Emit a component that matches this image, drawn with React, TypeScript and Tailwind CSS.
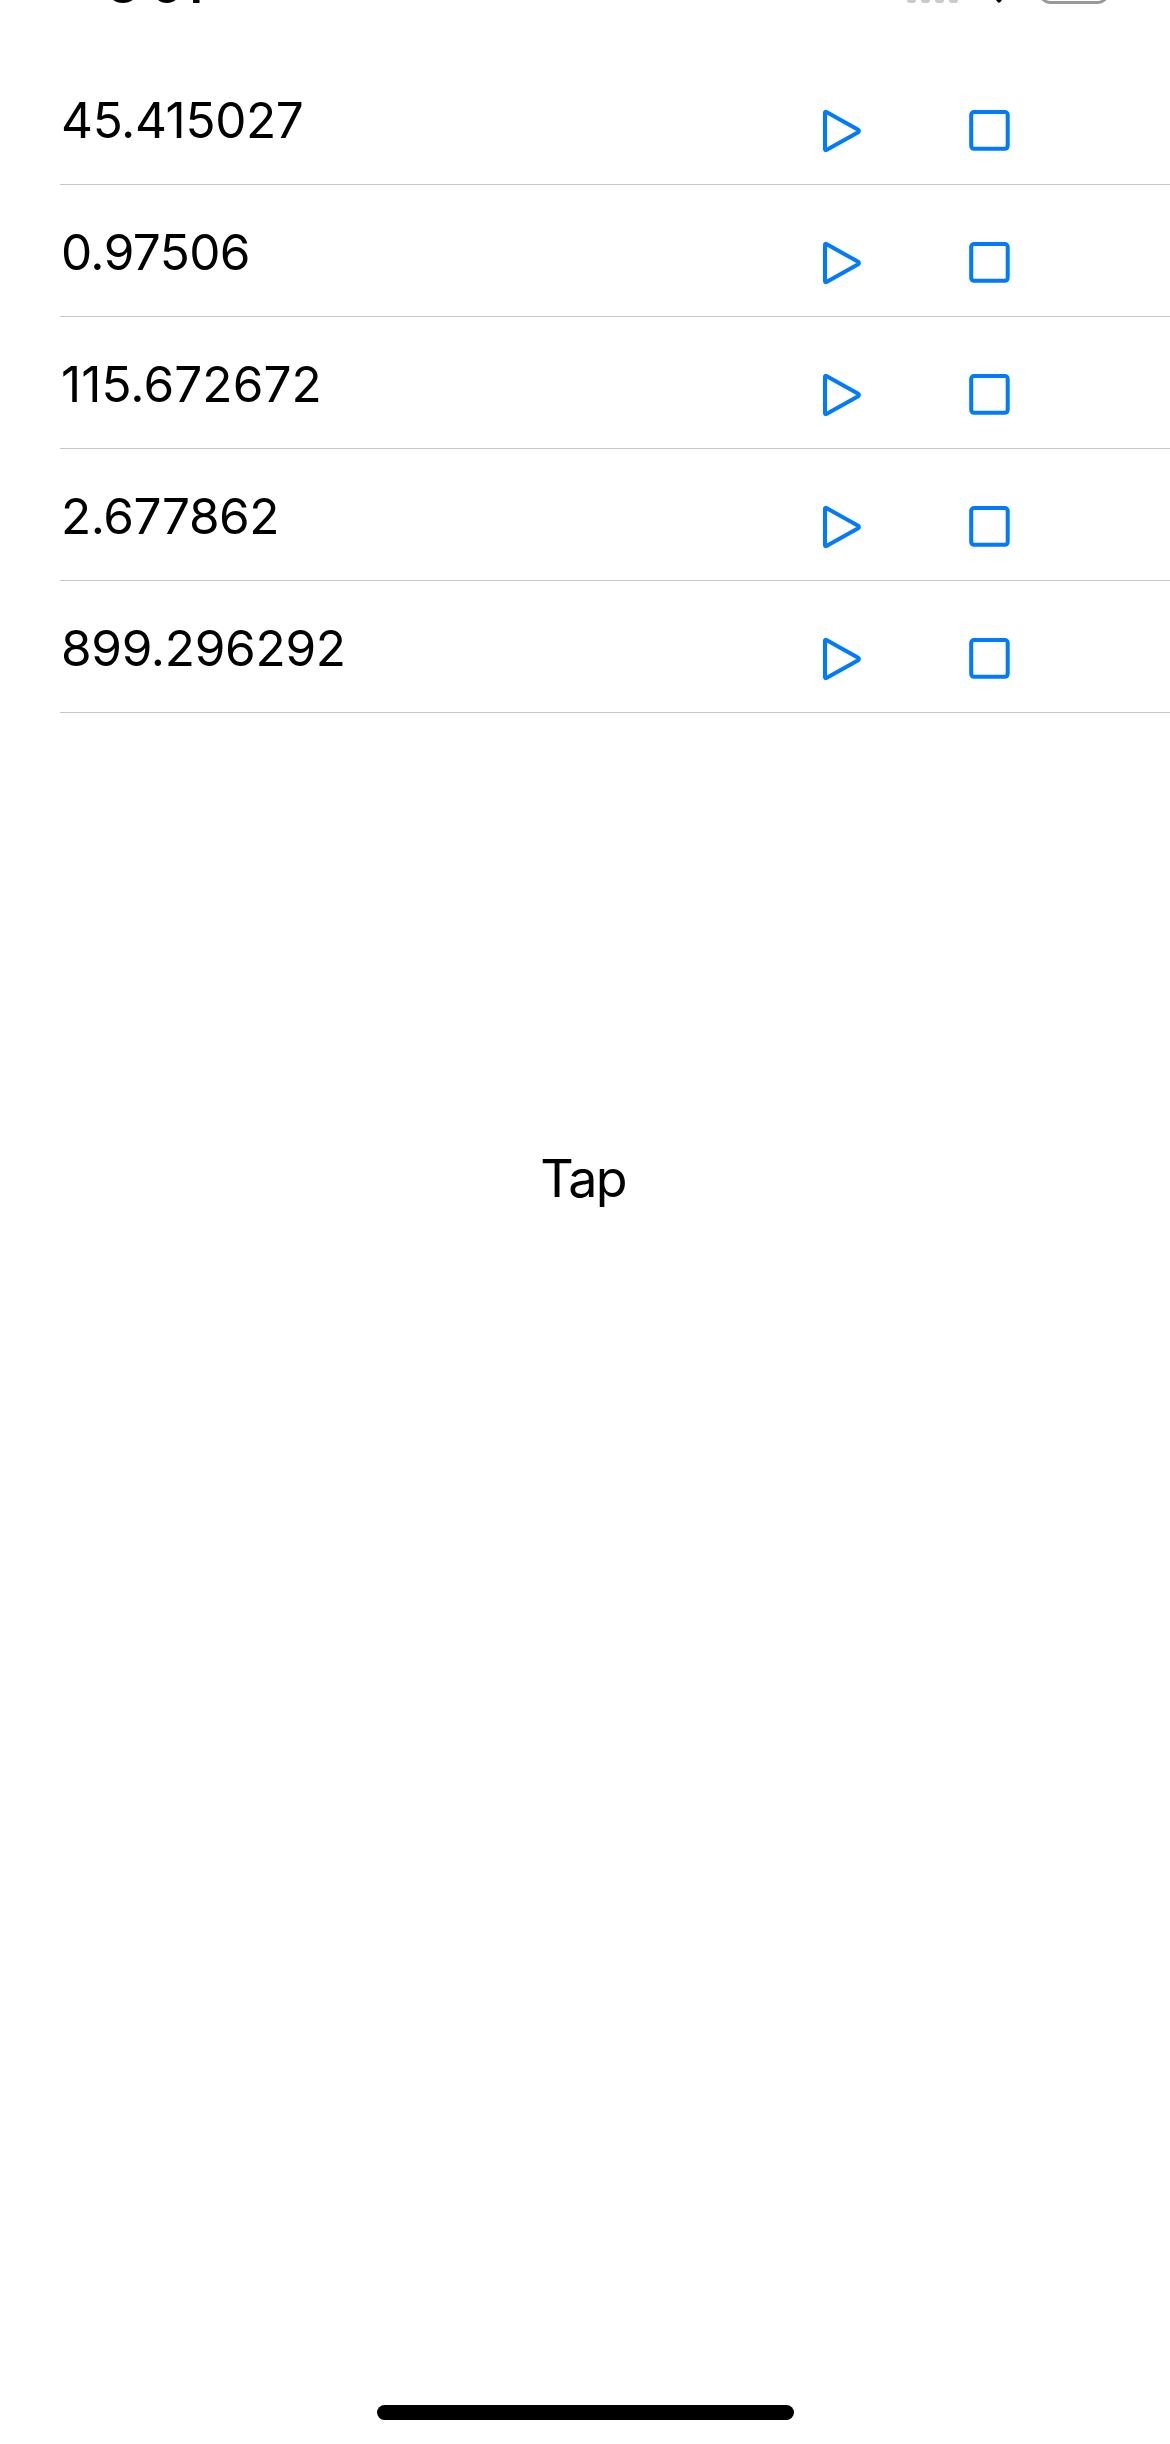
import React from "react";

const rows = [
  { value: "45.415027", spacing: "tracking-[-0.35px]" },
  { value: "0.97506", spacing: "tracking-[-0.6px]" },
  { value: "115.672672", spacing: "tracking-[0.1px]" },
  { value: "2.677862", spacing: "tracking-[-0.45px]" },
  { value: "899.296292", spacing: "tracking-[-0.3px]" },
];

function StatusBar() {
  return (
    <header className="relative h-[53px] shrink-0 overflow-hidden">
      <div className="absolute left-[107px] top-[-47px] flex h-[64px] text-[50px] font-semibold leading-[64px]">
        <span className="w-[31px] text-center">8</span>
        <span className="relative top-[-7px] w-[13px] text-center">:</span>
        <span className="w-[31px] text-center">5</span>
        <span className="w-[20px] text-center">1</span>
      </div>
      <svg className="absolute left-[900px] top-0" width="220" height="8" viewBox="0 0 220 8" fill="none">
        {[7, 21, 35, 49].map((x) => (
          <rect key={x} x={x} y="-6" width="9" height="9" rx="3" fill="#cacaca" />
        ))}
        <path d="M94.5-2L97.6 2Q99 3.6 100.4 2L103.5-2Z" fill="#000" />
        <rect x="139.5" y="-31" width="69" height="33.5" rx="11" stroke="#999" strokeWidth="3" />
      </svg>
    </header>
  );
}

function PlayIcon() {
  return (
    <svg width="42" height="44" viewBox="0 0 42 44" fill="none" stroke="#007aff" strokeWidth="4" strokeLinejoin="round">
      <path d="M4 3.9Q4 2.4 5.4 3.1L37.2 20.8Q38.6 22 37.2 23.2L5.4 40.9Q4 41.6 4 40.1Z" />
    </svg>
  );
}

function StopIcon() {
  return (
    <svg width="44" height="44" viewBox="0 0 44 44" fill="none" stroke="#007aff" strokeWidth="4">
      <rect x="4.2" y="3" width="36.5" height="36.8" rx="2.8" />
    </svg>
  );
}

export default function App() {
  return (
    <main className="flex h-[2444px] w-[1170px] flex-col overflow-hidden bg-white font-['Inter',sans-serif] text-black">
      <StatusBar />
      <ul className="flex shrink-0 flex-col pl-[60px]">
        {rows.map((row) => (
          <li key={row.value} className="flex h-[132px] items-start border-b border-[#c6c6c8]">
            <span className={`mt-[35px] w-[761px] whitespace-nowrap pl-px text-[49.5px] leading-[64px] ${row.spacing}`}>
              {row.value}
            </span>
            <button className="mt-[56px] w-[146px]" aria-label="Play"><PlayIcon /></button>
            <button className="mt-[56px]" aria-label="Stop"><StopIcon /></button>
          </li>
        ))}
      </ul>
      <div className="flex flex-1 items-start justify-center pr-[4px] pt-[434px]">
        <span className="text-[52px] leading-[64px] tracking-[-1.8px]">Tap</span>
      </div>
      <div className="mb-6 h-[15px] w-[417px] shrink-0 self-center rounded-full bg-black" />
    </main>
  );
}
